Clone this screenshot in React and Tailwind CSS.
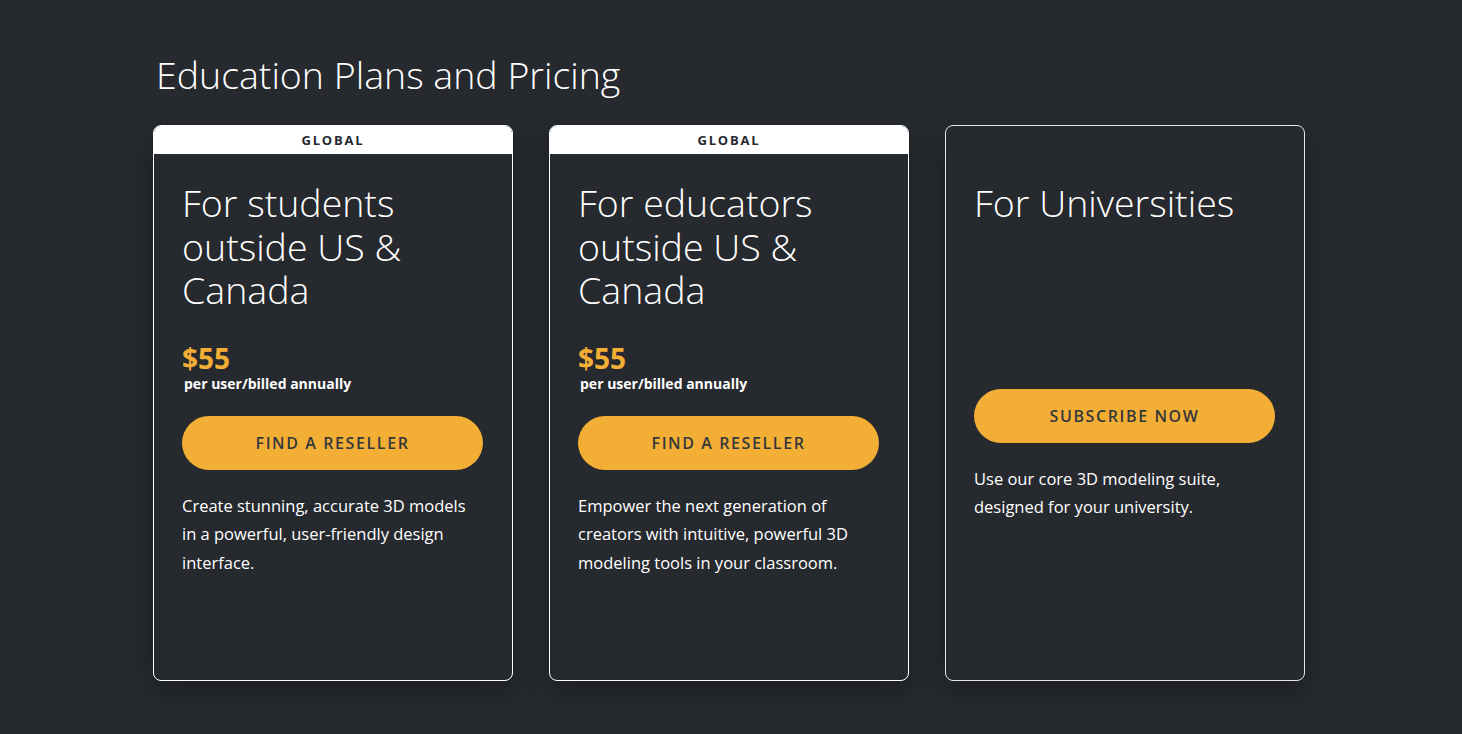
import React from "react";

const cards = [
  {
    badge: "GLOBAL",
    title: ["For students", "outside US &", "Canada"],
    price: "$55",
    sub: "per user/billed annually",
    cta: "FIND A RESELLER",
    desc: ["Create stunning, accurate 3D models", "in a powerful, user-friendly design", "interface."],
  },
  {
    badge: "GLOBAL",
    title: ["For educators", "outside US &", "Canada"],
    price: "$55",
    sub: "per user/billed annually",
    cta: "FIND A RESELLER",
    desc: ["Empower the next generation of", "creators with intuitive, powerful 3D", "modeling tools in your classroom."],
  },
  {
    badge: null,
    title: ["For Universities"],
    cta: "SUBSCRIBE NOW",
    desc: ["Use our core 3D modeling suite,", "designed for your university."],
  },
];

function Card({ c }) {
  return (
    <div
      className={
        "w-[360px] h-[556px] rounded-[8px] flex flex-col overflow-hidden shadow-[0_10px_24px_rgba(0,0,0,0.28)] " +
        (c.badge ? "border border-white" : "border border-[#e6e6e6]")
      }
    >
      {c.badge ? (
        <div className="h-[28px] bg-white flex items-center justify-center text-[13px] font-bold tracking-[1.8px] text-[#26292e] leading-none">
          {c.badge}
        </div>
      ) : (
        <div className="h-[28px]" />
      )}
      <div className="px-[28px] pt-[27px] flex flex-col">
        <h3 className="text-[37.5px] font-light leading-[43.5px] text-white">
          {c.title.map((t, i) => (
            <div key={i}>{t}</div>
          ))}
        </h3>
        {c.price ? (
          <>
            <div className="mt-[30px] text-[28px] font-bold leading-[32px] text-[#f3ae35]">{c.price}</div>
            <div className="pl-[2px] text-[14px] font-bold leading-[20px] text-white">{c.sub}</div>
            <button className="mt-[22px] w-[301px] h-[54px] rounded-full bg-[#f3ae35] text-[16px] font-semibold tracking-[1.6px] text-[#34373b]">
              {c.cta}
            </button>
          </>
        ) : (
          <button className="mt-[164px] w-[301px] h-[54px] rounded-full bg-[#f3ae35] text-[16px] font-semibold tracking-[1.6px] text-[#34373b]">
            {c.cta}
          </button>
        )}
        <p className="mt-[22px] text-[16.5px] leading-[28.5px] text-white">
          {c.desc.map((t, i) => (
            <span key={i} className="block">{t}</span>
          ))}
        </p>
      </div>
    </div>
  );
}

export default function App() {
  return (
    <div
      className="min-h-[734px] w-full bg-[#26292e] text-white"
      style={{ fontFamily: '"Open Sans", "Noto Sans", sans-serif' }}
    >
      <div className="ml-[153px] pt-[53px] w-[1152px]">
        <h1 className="pl-[3px] text-[37.5px] font-light leading-[43px] text-white">Education Plans and Pricing</h1>
        <div className="mt-[29px] flex gap-[36px]">
          {cards.map((c, i) => (
            <Card key={i} c={c} />
          ))}
        </div>
      </div>
    </div>
  );
}
